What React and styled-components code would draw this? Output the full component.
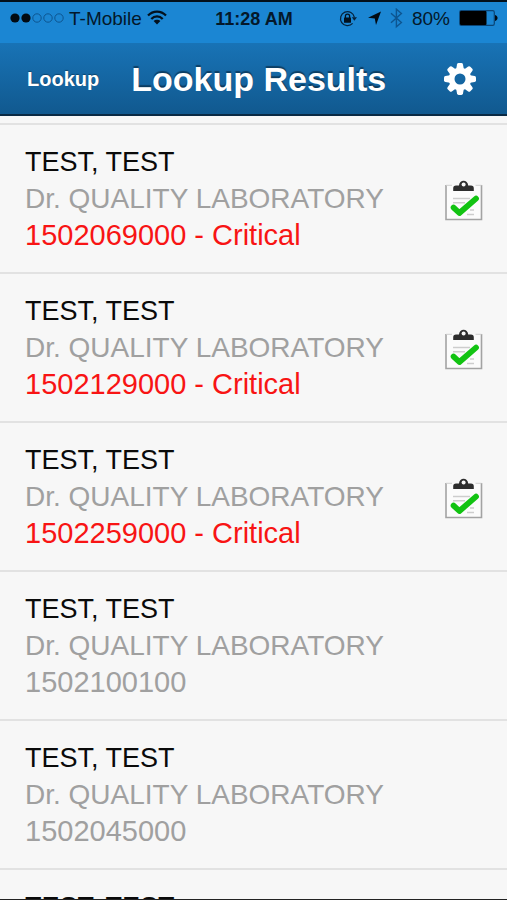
import React from 'react';
import styled, { createGlobalStyle } from 'styled-components';

const GlobalStyle = createGlobalStyle`
  * {
    box-sizing: border-box;
  }
  body {
    margin: 0;
    background: #f7f7f7;
    font-family: 'Liberation Sans', Arial, sans-serif;
  }
`;

const results = [
  { id: '1502069000', critical: true },
  { id: '1502129000', critical: true },
  { id: '1502259000', critical: true },
  { id: '1502100100', critical: false },
  { id: '1502045000', critical: false },
  { id: '1502045100', critical: false },
];

const SignalDots = () => (
  <svg width="54" height="12" viewBox="0 0 54 12" aria-hidden="true">
    <circle cx="5" cy="5" r="4.6" fill="#020a12" />
    <circle cx="16" cy="5" r="4.6" fill="#020a12" />
    {[27, 38, 49].map((x) => (
      <circle key={x} cx={x} cy="5" r="4.2" fill="none" stroke="#0d5590" />
    ))}
  </svg>
);

const WifiIcon = () => (
  <svg width="20" height="17" viewBox="0 0 20 17" aria-hidden="true">
    <g fill="none" stroke="#03111e" strokeWidth="2.2">
      <path d="M1 5.6 C6 .2 14 .2 19 5.6" />
      <path d="M4.3 9 C7.5 5.5 12.5 5.5 15.7 9" />
    </g>
    <path d="M10 14.4 L6.6 11 C8.4 9.3 11.6 9.3 13.4 11 Z" fill="#03111e" />
  </svg>
);

const RotationLockIcon = () => (
  <svg width="20" height="17" viewBox="0 0 20 17" aria-hidden="true">
    <path
      d="M13.6 13.4 A7 7 0 1 1 15.4 7.4"
      fill="none"
      stroke="#06233d"
      strokeWidth="1.3"
    />
    <path d="M12.8 7.2 H18 L15.4 10.8 Z" fill="#06233d" />
    <rect x="5" y="7.6" width="7" height="5.2" rx=".6" fill="#03111e" />
    <path
      d="M6.4 8 V6.2 a2.1 2.1 0 0 1 4.2 0 V8"
      fill="none"
      stroke="#03111e"
      strokeWidth="1.3"
    />
  </svg>
);

const LocationIcon = () => (
  <svg width="13" height="16" viewBox="0 0 13 16" aria-hidden="true">
    <path d="M13 .5 L8 14 L6.8 7.4 L0 6.8 Z" fill="#020a12" />
  </svg>
);

const BluetoothIcon = () => (
  <svg width="13" height="22" viewBox="0 0 13 22" aria-hidden="true">
    <path
      d="M1 5.2 L11.4 14.6 L6.4 18.8 V1.2 L11.4 5.4 L1 14.8"
      fill="none"
      stroke="#0d5590"
      strokeWidth="1.4"
    />
  </svg>
);

const BatteryIcon = () => (
  <svg width="39" height="17" viewBox="0 0 39 17" aria-hidden="true">
    <rect
      x=".7"
      y=".7"
      width="34.6"
      height="14.6"
      rx="1.6"
      fill="none"
      stroke="#0b4576"
      strokeWidth="1.2"
    />
    <rect x="1" y="1" width="26.5" height="14" rx="1" fill="#000" />
    <path d="M36 5 C39.4 6 39.4 10 36 11 Z" fill="#020a12" />
  </svg>
);

const GearIcon = () => (
  <svg width="32" height="32" viewBox="-16 -16 32 32" aria-hidden="true">
    {[0, 45, 90, 135, 180, 225, 270, 315].map((angle) => (
      <path
        key={angle}
        d="M-3.8 -10 L-3 -14.6 Q-2.7 -16 -1.4 -16 H1.4 Q2.7 -16 3 -14.6 L3.8 -10 Z"
        transform={`rotate(${angle})`}
        fill="#fff"
      />
    ))}
    <circle r="8.4" fill="none" stroke="#fff" strokeWidth="5.8" />
  </svg>
);

const ClipboardIcon = () => (
  <svg width="38" height="44" viewBox="0 -3 38 44" role="img" aria-label="Ready">
    <rect x="1" y="5" width="35.5" height="34.5" fill="#fbfbfb" />
    <path d="M1 5 V39.5 H36.5 V5" fill="none" stroke="#a3a3a3" strokeWidth="1.6" />
    <path d="M1 5.3 H7 M30.5 5.3 H36.5" stroke="#cfcfcf" />
    <g stroke="#cdcdcd" strokeWidth="1.4">
      <path d="M8 18.5 H25 M8 22.8 H20 M8 30 H14 M22 34.5 H29 M25 30 H29" />
    </g>
    <path
      d="M8.2 11 V8.4 Q8.2 5.6 11 5.6 H14 C14.2 -.8 23 -.8 23.2 5.6 H26 Q28.8 5.6 28.8 8.4 V11 Z"
      fill="#2d2d2d"
    />
    <circle cx="18.6" cy="4.6" r="2" fill="#f7f7f7" />
    <path
      d="M8.6 27.6 L14.4 33 L31 18.6"
      fill="none"
      stroke="#12c312"
      strokeWidth="5.8"
      strokeLinecap="round"
      strokeLinejoin="round"
    />
  </svg>
);

const LookupResults = () => {
  return (
    <Screen>
      <StatusBar>
        <StatusGroup gap={5}>
          <SignalDots />
          <Carrier>T-Mobile</Carrier>
          <WifiIcon />
        </StatusGroup>
        <Time>11:28 AM</Time>
        <StatusGroup gap={9} end>
          <RotationLockIcon />
          <LocationIcon />
          <BluetoothIcon />
          <Carrier>80%</Carrier>
          <BatteryIcon />
        </StatusGroup>
      </StatusBar>
      <NavBar>
        <BackButton type="button">Lookup</BackButton>
        <Title>Lookup Results</Title>
        <SettingsButton type="button" aria-label="Settings">
          <GearIcon />
        </SettingsButton>
      </NavBar>
      <ResultList>
        {results.map((item) => (
          <ResultItem key={item.id}>
            <ResultLink href={`#${item.id}`}>
              <Details>
                <Patient>TEST, TEST</Patient>
                <Doctor>Dr. QUALITY LABORATORY</Doctor>
                <Accession critical={item.critical}>
                  {item.id}
                  {item.critical && ' - Critical'}
                </Accession>
              </Details>
              {item.critical && <ClipboardIcon />}
            </ResultLink>
          </ResultItem>
        ))}
      </ResultList>
    </Screen>
  );
};

export default function App() {
  return (
    <>
      <GlobalStyle />
      <LookupResults />
    </>
  );
}

const Screen = styled.main`
  display: flex;
  flex-direction: column;
  height: 100vh;
  overflow: hidden;
  border-top: 2px solid #03101c;
  border-bottom: 1px solid #222222;
`;

const StatusBar = styled.div`
  display: grid;
  grid-template-columns: 1fr auto 1fr;
  align-items: center;
  flex: none;
  height: 41px;
  padding: 0 9px 8px 10px;
  background: #1b86d3;
`;

const StatusGroup = styled.div.withConfig({
  shouldForwardProp: (prop) => prop !== 'end' && prop !== 'gap',
})`
  display: flex;
  align-items: center;
  justify-content: ${(props) => (props.end ? 'flex-end' : 'flex-start')};
  gap: ${(props) => props.gap}px;
`;

const Carrier = styled.span`
  font-size: 19px;
  line-height: 24px;
  color: #04182a;
`;

const Time = styled.span`
  font-size: 18px;
  font-weight: 700;
  line-height: 24px;
  color: #04182a;
`;

const NavBar = styled.header`
  display: flex;
  align-items: center;
  flex: none;
  height: 73px;
  padding: 0 31px 0 27px;
  background: linear-gradient(#1873b6, #11598f);
  border-bottom: 2px solid #0a2a44;
`;

const BackButton = styled.button`
  padding: 0;
  border: 0;
  background: none;
  font-family: inherit;
  font-size: 20px;
  font-weight: 700;
  line-height: 26px;
  color: #ffffff;
  text-shadow: 0 -1px 1px rgba(0, 0, 0, 0.35);
`;

const Title = styled.h1`
  flex: 1;
  margin: 0 0 0 32px;
  font-size: 34px;
  font-weight: 700;
  line-height: 40px;
  white-space: nowrap;
  color: #ffffff;
  text-shadow: 0 -2px 1px rgba(0, 0, 0, 0.4);
`;

const SettingsButton = styled.button`
  display: flex;
  padding: 0;
  border: 0;
  background: none;
`;

const ResultList = styled.ul`
  flex: 1;
  min-height: 0;
  overflow: hidden;
  margin: 7px 0 0;
  padding: 0;
  list-style: none;
`;

const ResultItem = styled.li`
  border-top: 2px solid #e2e2e2;
`;

const ResultLink = styled.a`
  display: flex;
  align-items: center;
  justify-content: space-between;
  padding: 19px 24px 19px 25px;
  text-decoration: none;
`;

const Details = styled.div`
  white-space: nowrap;
`;

const Patient = styled.div`
  font-size: 27px;
  line-height: 37px;
  color: #0a0a0a;
`;

const Doctor = styled.div`
  font-size: 28px;
  line-height: 36px;
  color: #a0a0a0;
`;

const Accession = styled.div.withConfig({
  shouldForwardProp: (prop) => prop !== 'critical',
})`
  font-size: 29px;
  line-height: 36px;
  color: ${(props) => (props.critical ? '#f81414' : '#a0a0a0')};
`;
